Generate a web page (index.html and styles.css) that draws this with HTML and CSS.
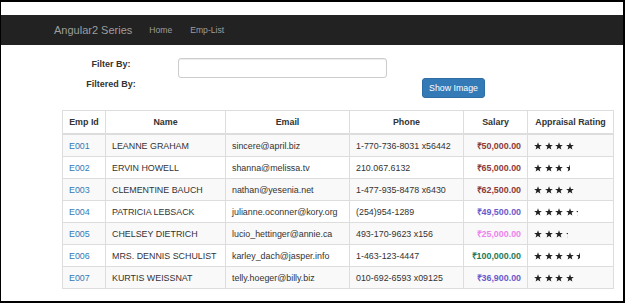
FILE: index.html
```html
<!DOCTYPE html>
<html>
<head>
<meta charset="utf-8">
<link rel="stylesheet" href="styles.css">
</head>
<body>
<svg width="0" height="0" class="defs">
  <defs>
    <symbol id="star" viewBox="0 0 10 10">
      <polygon points="5,0.3 6.25,3.7 9.8,3.75 7,5.95 8,9.5 5,7.45 2,9.5 3,5.95 0.2,3.75 3.75,3.7"/>
    </symbol>
  </defs>
</svg>
<div class="frame">
  <div class="topstrip"></div>
  <nav class="navbar">
    <span class="brand">Angular2 Series</span>
    <a class="navlink">Home</a>
    <a class="navlink">Emp-List</a>
  </nav>
  <div class="filters">
    <label class="flabel">Filter By:</label>
    <div class="finput"></div>
    <div></div>
    <label class="flabel">Filtered By:</label>
    <div></div>
    <button class="btn">Show Image</button>
  </div>
  <table class="emps">
    <thead>
      <tr><th class="c1">Emp Id</th><th class="c2">Name</th><th class="c3">Email</th><th class="c4">Phone</th><th class="c5">Salary</th><th class="c6">Appraisal Rating</th></tr>
    </thead>
    <tbody>
      <tr><td><a class="id">E001</a></td><td>LEANNE GRAHAM</td><td>sincere@april.biz</td><td>1-770-736-8031 x56442</td><td class="sal brown">₹50,000.00</td>
        <td><span class="stars"><span class="st"><svg><use href="#star"/></svg></span><span class="st"><svg><use href="#star"/></svg></span><span class="st"><svg><use href="#star"/></svg></span><span class="st"><svg><use href="#star"/></svg></span></span></td></tr>
      <tr><td><a class="id">E002</a></td><td>ERVIN HOWELL</td><td>shanna@melissa.tv</td><td>210.067.6132</td><td class="sal brown">₹65,000.00</td>
        <td><span class="stars"><span class="st"><svg><use href="#star"/></svg></span><span class="st"><svg><use href="#star"/></svg></span><span class="st"><svg><use href="#star"/></svg></span><span class="st part" style="width:4px"><svg><use href="#star"/></svg></span></span></td></tr>
      <tr><td><a class="id">E003</a></td><td>CLEMENTINE BAUCH</td><td>nathan@yesenia.net</td><td>1-477-935-8478 x6430</td><td class="sal brown">₹62,500.00</td>
        <td><span class="stars"><span class="st"><svg><use href="#star"/></svg></span><span class="st"><svg><use href="#star"/></svg></span><span class="st"><svg><use href="#star"/></svg></span><span class="st"><svg><use href="#star"/></svg></span></span></td></tr>
      <tr><td><a class="id">E004</a></td><td>PATRICIA LEBSACK</td><td>julianne.oconner@kory.org</td><td>(254)954-1289</td><td class="sal slate">₹49,500.00</td>
        <td><span class="stars"><span class="st"><svg><use href="#star"/></svg></span><span class="st"><svg><use href="#star"/></svg></span><span class="st"><svg><use href="#star"/></svg></span><span class="st"><svg><use href="#star"/></svg></span><span class="st part" style="width:2.2px"><svg><use href="#star"/></svg></span></span></td></tr>
      <tr><td><a class="id">E005</a></td><td>CHELSEY DIETRICH</td><td>lucio_hettinger@annie.ca</td><td>493-170-9623 x156</td><td class="sal violet">₹25,000.00</td>
        <td><span class="stars"><span class="st"><svg><use href="#star"/></svg></span><span class="st"><svg><use href="#star"/></svg></span><span class="st"><svg><use href="#star"/></svg></span><span class="st part" style="width:2.2px"><svg><use href="#star"/></svg></span></span></td></tr>
      <tr><td><a class="id">E006</a></td><td>MRS. DENNIS SCHULIST</td><td>karley_dach@jasper.info</td><td>1-463-123-4447</td><td class="sal green">₹100,000.00</td>
        <td><span class="stars"><span class="st"><svg><use href="#star"/></svg></span><span class="st"><svg><use href="#star"/></svg></span><span class="st"><svg><use href="#star"/></svg></span><span class="st"><svg><use href="#star"/></svg></span><span class="st part" style="width:4px"><svg><use href="#star"/></svg></span></span></td></tr>
      <tr><td><a class="id">E007</a></td><td>KURTIS WEISSNAT</td><td>telly.hoeger@billy.biz</td><td>010-692-6593 x09125</td><td class="sal slate">₹36,900.00</td>
        <td><span class="stars"><span class="st"><svg><use href="#star"/></svg></span><span class="st"><svg><use href="#star"/></svg></span><span class="st"><svg><use href="#star"/></svg></span><span class="st"><svg><use href="#star"/></svg></span></span></td></tr>
    </tbody>
  </table>
</div>
</body>
</html>
```
FILE: styles.css
```css
html, body { margin: 0; padding: 0; background: #fff; }
body { font-family: "Liberation Sans", Arial, sans-serif; color: #333; }
.defs { position: absolute; width: 0; height: 0; overflow: hidden; }
.frame {
  width: 625px; height: 303px; box-sizing: border-box;
  border-top: 2px solid #000; border-left: 1px solid #000;
  border-right: 2px solid #000; border-bottom: 2px solid #000;
  overflow: hidden; background: #fff;
}
.topstrip { height: 13px; background: #fff; }
.navbar {
  height: 30px; background: #222; display: flex; align-items: center;
  padding-left: 53px; box-sizing: border-box;
}
.brand { color: #9d9d9d; font-size: 11px; margin-right: 17px; }
.navlink { color: #9d9d9d; font-size: 8.6px; margin-right: 18px; }
.filters {
  display: grid; grid-template-columns: 62px 209px 63px;
  grid-template-rows: 20px 20px; column-gap: 35.5px;
  margin-left: 79px; padding-top: 13px;
}
.flabel { font-size: 9px; font-weight: bold; text-align: center; align-self: start; line-height: 12px; color: #333; }
.finput { border: 1px solid #ccc; border-radius: 3px; box-sizing: border-box; height: 20px; box-shadow: inset 0 1px 1px rgba(0,0,0,.075); }
.btn {
  background: #337ab7; border: 1px solid #2e6da4; border-radius: 3px; color: #fff;
  font-family: "Liberation Sans", Arial, sans-serif; font-size: 8.8px; height: 20px; width: 63px; padding: 0;
}
.emps {
  margin-top: 12px; margin-left: 61px; width: 552px;
  border-collapse: collapse; border: 1px solid #ddd; font-size: 8.9px;
}
.emps th, .emps td { border: 1px solid #ddd; padding: 0 6px; text-align: left; white-space: nowrap; }
.emps th { height: 22px; font-weight: bold; text-align: center; border-bottom: 2px solid #ddd; }
.emps td { height: 21px; }
.emps tbody tr:nth-child(odd) { background: #f9f9f9; }
.c1 { width: 30px; } .c2 { width: 107px; } .c3 { width: 111px; } .c4 { width: 101px; } .c5 { width: 51px; }
.id { color: #337ab7; }
.sal { text-align: right !important; font-weight: bold; }
.brown { color: #8b3a3a; }
.slate { color: #6a5acd; }
.violet { color: #ee82ee; }
.green { color: #1e7a5a; }
.stars { display: inline-flex; align-items: center; vertical-align: middle; }
.st { display: inline-block; width: 8px; height: 8px; margin-right: 2.5px; overflow: hidden; }
.st svg { display: block; width: 8px; height: 8px; fill: #222; }
.st.part { margin-right: 0; }
```
